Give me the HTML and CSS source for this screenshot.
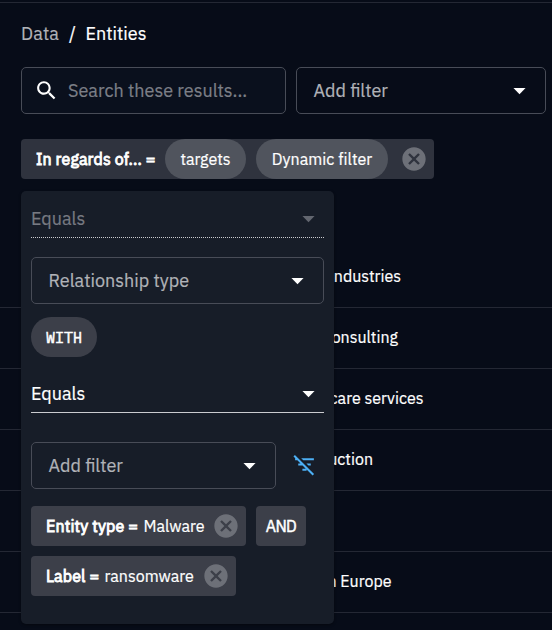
FILE: index.html
```html
<!DOCTYPE html>
<html lang="en">
<head>
<meta charset="utf-8">
<title>Data / Entities</title>
<link rel="stylesheet" href="styles.css">
</head>
<body>
<main class="page">
  <nav class="crumbs"><span class="crumb-parent">Data</span><span class="crumb-sep">/</span><span class="crumb-current">Entities</span></nav>
  <div class="toolbar">
    <div class="field search">
      <svg class="search-icon" viewBox="0 0 24 24"><path d="M15.5 14h-.79l-.28-.27C15.41 12.59 16 11.11 16 9.5 16 5.91 13.09 3 9.5 3S3 5.91 3 9.5 5.91 16 9.5 16c1.61 0 3.09-.59 4.23-1.57l.27.28v.79l5 4.99L20.49 19zm-6 0C7.01 14 5 11.99 5 9.5S7.01 5 9.5 5 14 7.01 14 9.5 11.99 14 9.5 14"/></svg>
      <span class="search-text">Search these results...</span>
    </div>
    <div class="field select add-main"><span class="add-label">Add filter</span><svg class="arrow" viewBox="0 0 24 24"><path d="m7 10 5 5 5-5z"/></svg></div>
  </div>
  <div class="filter-anchor">
    <div class="filter-bar">
      <span class="strong regards">In regards of... =</span>
      <span class="pill pill-targets">targets</span>
      <span class="pill pill-dynamic">Dynamic filter</span>
      <svg class="close" viewBox="0 0 24 24"><path d="M12 2C6.47 2 2 6.47 2 12s4.47 10 10 10 10-4.47 10-10S17.53 2 12 2m5 13.59L15.59 17 12 13.41 8.41 17 7 15.59 10.59 12 7 8.41 8.41 7 12 10.59 15.59 7 17 8.41 13.41 12z"/></svg>
    </div>
    <section class="popover">
      <div class="operator operator-disabled"><span>Equals</span><svg class="arrow" viewBox="0 0 24 24"><path d="m7 10 5 5 5-5z"/></svg></div>
      <div class="field select relation"><span>Relationship type</span><svg class="arrow" viewBox="0 0 24 24"><path d="m7 10 5 5 5-5z"/></svg></div>
      <span class="with">WITH</span>
      <div class="operator"><span>Equals</span><svg class="arrow" viewBox="0 0 24 24"><path d="m7 10 5 5 5-5z"/></svg></div>
      <div class="inner-row">
        <div class="field select add-inner"><span class="add-label">Add filter</span><svg class="arrow" viewBox="0 0 24 24"><path d="m7 10 5 5 5-5z"/></svg></div>
        <svg class="filter-off" viewBox="0 0 24 24"><path d="M10.83 8H21V6H8.83zm5 5H18v-2h-4.17zM14 16.83V18h-4v-2h3.17l-3-3H6v-2h2.17l-3-3H3V6h.17L1.39 4.22 2.8 2.81l18.38 18.38-1.41 1.41z"/></svg>
      </div>
      <div class="chips">
        <div class="chip chip-entity"><span class="strong t-entity">Entity type =</span><span>Malware</span><svg class="close" viewBox="0 0 24 24"><path d="M12 2C6.47 2 2 6.47 2 12s4.47 10 10 10 10-4.47 10-10S17.53 2 12 2m5 13.59L15.59 17 12 13.41 8.41 17 7 15.59 10.59 12 7 8.41 8.41 7 12 10.59 15.59 7 17 8.41 13.41 12z"/></svg></div>
        <div class="chip chip-and"><span>AND</span></div>
        <div class="chip chip-label"><span class="strong t-label">Label =</span><span>ransomware</span><svg class="close" viewBox="0 0 24 24"><path d="M12 2C6.47 2 2 6.47 2 12s4.47 10 10 10 10-4.47 10-10S17.53 2 12 2m5 13.59L15.59 17 12 13.41 8.41 17 7 15.59 10.59 12 7 8.41 8.41 7 12 10.59 15.59 7 17 8.41 13.41 12z"/></svg></div>
      </div>
    </section>
  </div>
  <div class="list">
    <div class="row"><span class="name name-industries">Industries</span></div>
    <div class="row"><span class="name name-consulting">Consulting</span></div>
    <div class="row"><span class="name name-services">care services</span></div>
    <div class="row"><span class="name name-production">uction</span></div>
    <div class="row"></div>
    <div class="row"><span class="name name-europe">n Europe</span></div>
  </div>
</main>
</body>
</html>
```
FILE: styles.css
```css
* { box-sizing: border-box; }
html, body { margin: 0; background: #070c18; }
body { width: 552px; height: 630px; overflow: hidden; padding-top: 2px; font-family: "IBM Plex Sans", Roboto, sans-serif; font-size: 16px; color: #fff; -webkit-text-stroke: .2px currentColor; }
span { white-space: nowrap; }
svg { display: block; flex: none; fill: currentColor; }
.page { border-top: 1px solid #242834; }
.crumbs { display: flex; height: 64px; padding: 0 0 3px 21px; align-items: center; font-size: 18px; }
.crumb-parent { width: 48px; color: #b1b3b8; letter-spacing: .1px; }
.crumb-sep { width: 16.5px; }
.toolbar { display: flex; gap: 10px; padding-left: 21px; }
.field { display: flex; height: 47px; align-items: center; border: 1px solid #484c57; border-radius: 5px; font-size: 18px; }
.search { width: 265px; padding-left: 12px; background: #0a101d; color: #7c7f87; }
.search-icon { width: 25px; height: 25px; color: #fff; margin-right: 9px; }
.select { justify-content: space-between; padding: 0 11.5px 0 16.5px; color: #b1b3b8; }
.arrow { width: 29px; height: 29px; color: #fff; }
.add-main { width: 250px; }
.filter-anchor { position: relative; padding: 25px 0 0 21px; }
.filter-bar { display: flex; width: 413px; height: 40px; align-items: center; padding-left: 15px; background: #2f333e; border-radius: 4px; }
.strong { font-weight: 400; -webkit-text-stroke: .9px currentColor; letter-spacing: .12px; }
.regards { width: 129px; }
.pill { display: flex; height: 40px; align-items: center; justify-content: center; border-radius: 20px; background: #50545d; }
.pill-targets { width: 81px; margin-right: 10px; }
.pill-dynamic { width: 132px; margin-right: 12px; letter-spacing: .05px; }
.close { width: 28px; height: 28px; color: #6d7078; }
.popover { position: absolute; left: 21px; top: 77px; width: 313px; height: 433px; padding: 5px 10px; border-radius: 5px; background: #171d28; box-shadow: 0 1px 3px rgba(0,0,0,.4); }
.operator { display: flex; height: 42px; padding: 4px 1px 0 0; align-items: center; justify-content: space-between; border-bottom: 1px solid #cbccd0; font-size: 18px; }
.operator-disabled { border-bottom-style: dotted; color: #777a82; }
.operator-disabled .arrow { color: #62666f; }
.relation { margin-top: 19px; }
.with { display: flex; width: 66px; height: 40px; align-items: center; justify-content: center; margin: 13px 0 14px; border-radius: 20px; background: #3c3f49; font: 400 15px "IBM Plex Mono", "Liberation Mono", monospace; -webkit-text-stroke: .5px currentColor; }
.inner-row { display: flex; align-items: center; gap: 16px; margin-top: 29px; }
.add-inner { width: 245px; }
.filter-off { width: 25px; height: 25px; margin-bottom: 3px; color: #4db0f5; }
.chips { display: flex; flex-wrap: wrap; gap: 10px; margin-top: 17px; }
.chip { display: flex; height: 40px; align-items: center; padding-left: 15px; background: #3c3f49; border-radius: 4px; }
.chip .close { margin-left: auto; margin-right: 6px; }
.chip-entity { width: 215px; }
.chip-and { width: 50px; padding: 0; justify-content: center; letter-spacing: -.6px; -webkit-text-stroke: .5px currentColor; }
.chip-label { width: 205px; }
.t-entity { width: 97.5px; }
.t-label { width: 58.5px; }
.list { padding-top: 68px; }
.row { display: flex; height: 61px; align-items: center; padding-bottom: 2px; border-bottom: 1px solid #242834; }
.name { text-align: right; }
.name-industries { width: 401px; }
.name-consulting { width: 398px; }
.name-services { width: 423.5px; }
.name-production { width: 373px; }
.name-europe { width: 391.5px; }
```
